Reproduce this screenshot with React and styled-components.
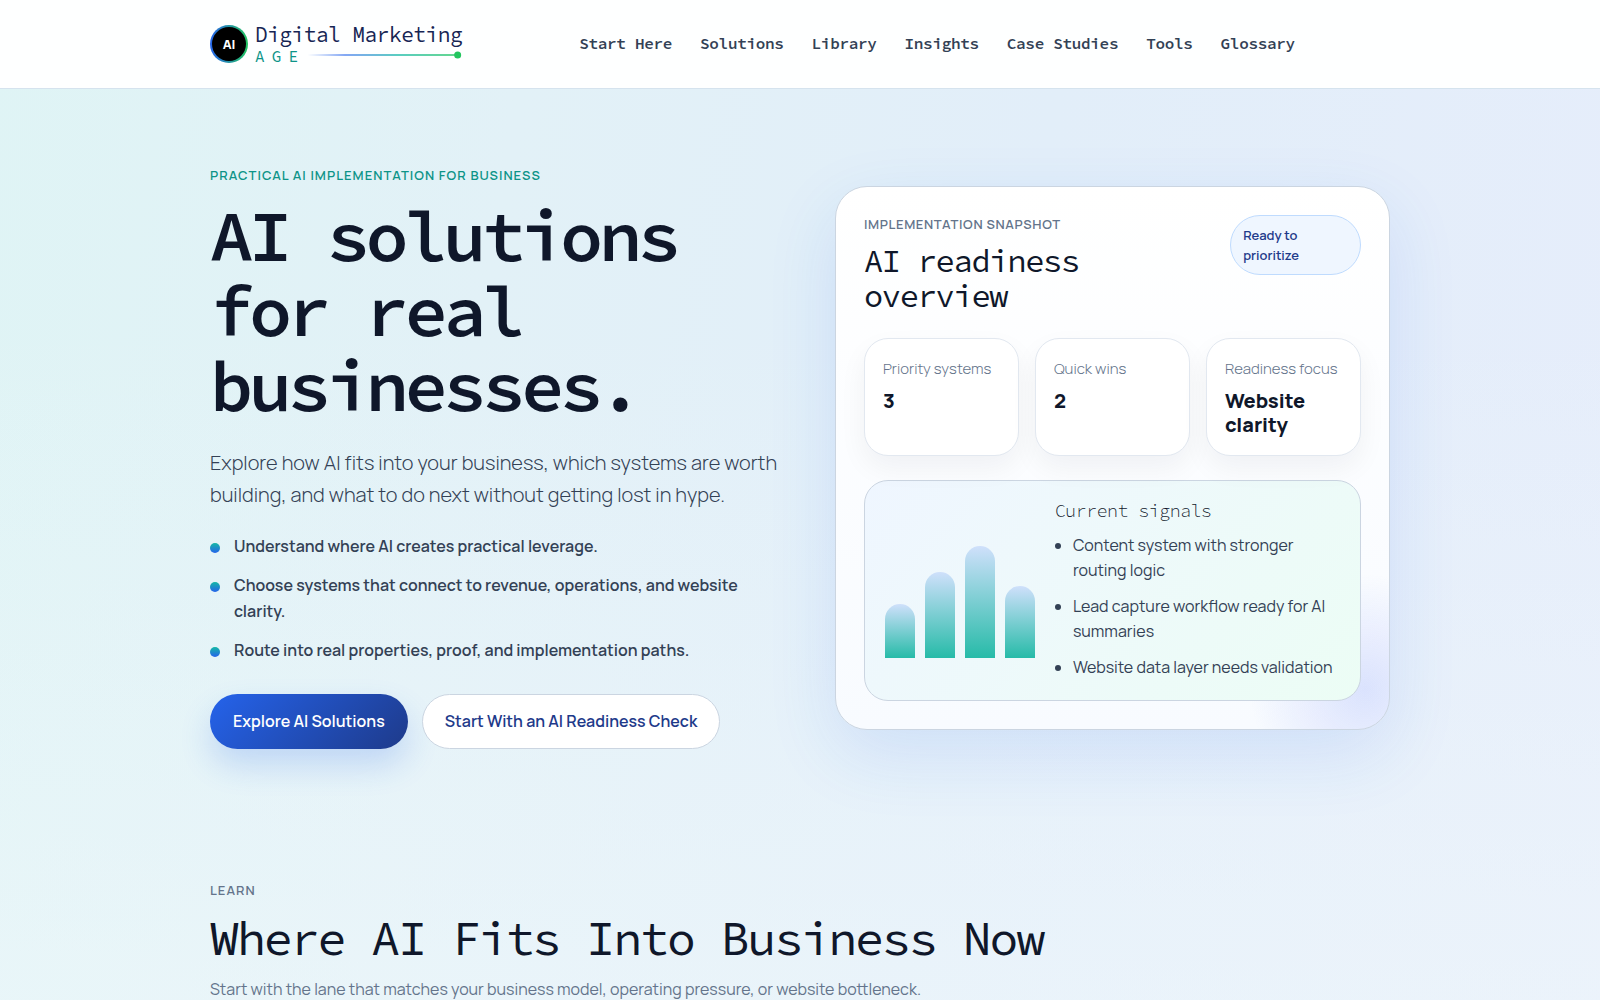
import React from 'react'
import styled, { createGlobalStyle } from 'styled-components'

const sans = `Manrope, Inter, 'Liberation Sans', sans-serif`
const mono = `'Source Code Pro', 'Noto Sans Mono', 'Liberation Mono', monospace`

const colors = {
	ink: '#0f172a',
	text: '#334155',
	muted: '#64748b',
	navy: '#1e3a8a',
	blue: '#2563eb',
	teal: '#0d9488',
	line: '#cbd5e1'
}

const GlobalStyle = createGlobalStyle`
	*, *::before, *::after {
		box-sizing: border-box;
	}
	body {
		margin: 0;
		color: ${colors.text};
		font-family: ${sans};
		font-size: 16px;
		line-height: 26px;
		background:
			linear-gradient(180deg, transparent 30%, rgba(240, 248, 251, 0.6) 100%),
			linear-gradient(100deg, #dff4f5 0%, #e2f1f7 30%, #e2eef9 60%, #e6edfb 100%);
	}
	h1, h2, h3, p, ul {
		margin: 0;
	}
`

const Container = styled.div`
	width: 100%;
	max-width: 1228px;
	margin: 0 auto;
	padding: 0 24px;
`

const Header = styled.header`
	background: rgba(255, 255, 255, 0.96);
	border-bottom: 1px solid #d5e3ee;
`

const HeaderRow = styled(Container)`
	display: flex;
	align-items: center;
	gap: 22px;
	min-height: 88px;
`

const Brand = styled.a`
	display: flex;
	align-items: center;
	gap: 7px;
	text-decoration: none;
`

const BrandMark = styled.span`
	display: grid;
	place-items: center;
	width: 38px;
	height: 38px;
	border: 2px solid transparent;
	border-radius: 50%;
	background:
		linear-gradient(#000, #000) padding-box,
		linear-gradient(90deg, ${colors.blue}, #22c55e) border-box;
	color: #fff;
	font-size: 13px;
	font-weight: 800;
	line-height: 16px;
`

const BrandName = styled.span`
	display: grid;
	font-family: ${mono};
`

const BrandTop = styled.span`
	color: #172554;
	font-size: 21px;
	line-height: 23px;
	letter-spacing: -0.02em;
`

const BrandBottom = styled.span`
	display: flex;
	align-items: center;
	color: ${colors.teal};
	font-size: 16px;
	line-height: 20px;
	letter-spacing: 0.45em;
`

const BrandRule = styled.svg`
	flex: 1;
	height: 8px;
	min-width: 0;
	margin-bottom: 2px;
`

const Nav = styled.nav`
	display: flex;
	flex: 1;
	justify-content: center;
	gap: 28px;
`

const NavLink = styled.a`
	padding-bottom: 2px;
	color: ${colors.text};
	font-family: ${mono};
	font-size: 16px;
	font-weight: 600;
	letter-spacing: -0.02em;
	text-decoration: none;
	white-space: nowrap;
`

const Hero = styled(Container)`
	display: grid;
	grid-template-columns: minmax(0, 1.05fr) minmax(0, 1fr);
	align-items: center;
	gap: 42px;
	padding-top: 77px;
	padding-bottom: 132px;
`

const Eyebrow = styled.p`
	color: ${p => (p.$accent ? colors.teal : colors.muted)};
	font-size: 13px;
	font-weight: 600;
	line-height: 18px;
	letter-spacing: ${p => (p.$tight ? '0.05em' : '0.08em')};
	text-transform: uppercase;
`

const HeroTitle = styled.h1`
	margin-top: 14px;
	color: ${colors.ink};
	font-family: ${mono};
	font-size: 72px;
	font-weight: 600;
	line-height: 75px;
	letter-spacing: -0.06em;
`

const Lead = styled.p`
	margin-top: 24px;
	font-size: 20px;
	font-weight: 300;
	line-height: 32px;
`

const Points = styled.ul`
	display: grid;
	gap: 13px;
	max-width: 560px;
	margin-top: 22px;
	padding: 0;
	list-style: none;
`

const Point = styled.li`
	display: flex;
	gap: 14px;
	font-weight: 600;

	&::before {
		content: '';
		flex: none;
		width: 10px;
		height: 10px;
		margin-top: 10px;
		border-radius: 50%;
		background: linear-gradient(180deg, #14b8a6, ${colors.blue});
	}
`

const Actions = styled.div`
	display: flex;
	flex-wrap: wrap;
	gap: 14px;
	margin-top: 31px;
`

const Button = styled.a`
	padding: 14px 22px;
	border: 1px solid ${p => (p.$primary ? 'transparent' : colors.line)};
	border-radius: 999px;
	background: ${p => (p.$primary
		? `linear-gradient(135deg, ${colors.blue}, ${colors.navy}) border-box`
		: '#fff')};
	box-shadow: ${p => (p.$primary ? '0 16px 32px rgba(37, 99, 235, 0.2)' : 'none')};
	color: ${p => (p.$primary ? '#fff' : colors.navy)};
	font-weight: 600;
	line-height: 25px;
	text-decoration: none;
`

const Card = styled.section`
	padding: 28px;
	border: 1px solid ${colors.line};
	border-radius: 32px;
	background:
		radial-gradient(circle 115px at calc(100% - 24px) calc(100% - 40px), rgba(99, 125, 246, 0.2), transparent),
		linear-gradient(180deg, #fff, #f8fbff);
	box-shadow: 0 24px 70px rgba(37, 99, 235, 0.12);
`

const CardHead = styled.div`
	display: flex;
	align-items: flex-start;
	justify-content: space-between;
	gap: 16px;
`

const CardTitle = styled.h2`
	margin-top: 11px;
	color: ${colors.ink};
	font-family: ${mono};
	font-size: 32px;
	font-weight: 400;
	line-height: 35px;
	letter-spacing: -0.04em;
`

const Pill = styled.span`
	padding: 9px 12px;
	border: 1px solid #bfdbfe;
	border-radius: 999px;
	background: #eff6ff;
	color: ${colors.navy};
	font-size: 13px;
	font-weight: 600;
	line-height: 20px;
`

const Stats = styled.div`
	display: grid;
	grid-template-columns: repeat(3, minmax(0, 1fr));
	gap: 16px;
	margin-top: 24px;
`

const Stat = styled.div`
	display: grid;
	align-content: start;
	gap: 8px;
	padding: 18px;
	border: 1px solid #e2e8f0;
	border-radius: 24px;
	background: #fff;
	box-shadow: 0 12px 28px rgba(15, 23, 42, 0.05);
`

const StatLabel = styled.span`
	color: ${colors.muted};
	font-size: 15px;
	font-weight: 300;
	line-height: 24px;
`

const StatValue = styled.strong`
	color: ${colors.ink};
	font-size: 20px;
	font-weight: 800;
	line-height: 24px;
`

const Signals = styled.div`
	display: grid;
	grid-template-columns: auto 1fr;
	align-items: center;
	gap: 20px;
	margin-top: 24px;
	padding: 20px;
	border: 1px solid ${colors.line};
	border-radius: 24px;
	background: linear-gradient(135deg, #eff6ff, #ecfdf5);
`

const Chart = styled.div`
	display: flex;
	align-items: flex-end;
	gap: 10px;
	height: 136px;
`

const ChartBar = styled.span`
	width: 30px;
	border-radius: 15px 15px 0 0;
	background: linear-gradient(180deg, #cfe0fb, #26bba8);
`

const SignalsTitle = styled.h3`
	color: ${colors.ink};
	font-family: ${mono};
	font-size: 18px;
	font-weight: 300;
	line-height: 20px;
	letter-spacing: -0.02em;
`

const SignalList = styled.ul`
	display: grid;
	gap: 11px;
	margin-top: 12px;
	padding-left: 18px;
	line-height: 25px;
`

const Learn = styled(Container)`
	padding-bottom: 80px;
`

const SectionTitle = styled.h2`
	margin: 13px 0 11px;
	color: ${colors.ink};
	font-family: ${mono};
	font-size: 48px;
	font-weight: 400;
	line-height: 53px;
	letter-spacing: -0.04em;
`

const SectionText = styled.p`
	color: ${colors.muted};
`

const navItems = ['Start Here', 'Solutions', 'Library', 'Insights', 'Case Studies', 'Tools', 'Glossary']

const points = [
	'Understand where AI creates practical leverage.',
	'Choose systems that connect to revenue, operations, and website clarity.',
	'Route into real properties, proof, and implementation paths.'
]

const stats = [
	{ label: 'Priority systems', value: '3' },
	{ label: 'Quick wins', value: '2' },
	{ label: 'Readiness focus', value: 'Website clarity' }
]

const bars = [54, 86, 112, 72]

const signals = [
	'Content system with stronger routing logic',
	'Lead capture workflow ready for AI summaries',
	'Website data layer needs validation'
]

const Logo = () =>
	<Brand href='#home'>
		<BrandMark>AI</BrandMark>
		<BrandName>
			<BrandTop>Digital Marketing</BrandTop>
			<BrandBottom>
				AGE
				<BrandRule viewBox='0 0 154 8' preserveAspectRatio='xMaxYMid meet' aria-hidden='true'>
					<defs>
						<linearGradient id='rule' gradientUnits='userSpaceOnUse' x1='0' x2='150' y1='0' y2='0'>
							<stop offset='0' stopColor='#2563eb' stopOpacity='0' />
							<stop offset='0.25' stopColor='#2563eb' stopOpacity='0.8' />
							<stop offset='0.6' stopColor='#14b8a6' />
							<stop offset='1' stopColor='#22c55e' />
						</linearGradient>
					</defs>
					<rect x='0' y='3.3' width='150' height='1.4' fill='url(#rule)' />
					<circle cx='150' cy='4' r='3.5' fill='#22c55e' />
				</BrandRule>
			</BrandBottom>
		</BrandName>
	</Brand>

const Snapshot = () =>
	<Card>
		<CardHead>
			<div>
				<Eyebrow $tight>Implementation snapshot</Eyebrow>
				<CardTitle>AI readiness overview</CardTitle>
			</div>
			<Pill>Ready to prioritize</Pill>
		</CardHead>
		<Stats>
			{ stats.map(stat =>
				<Stat key={stat.label}>
					<StatLabel>{ stat.label }</StatLabel>
					<StatValue>{ stat.value }</StatValue>
				</Stat>
			)}
		</Stats>
		<Signals>
			<Chart aria-hidden='true'>
				{ bars.map(height => <ChartBar key={height} style={{ height }} />) }
			</Chart>
			<div>
				<SignalsTitle>Current signals</SignalsTitle>
				<SignalList>
					{ signals.map(signal => <li key={signal}>{ signal }</li>) }
				</SignalList>
			</div>
		</Signals>
	</Card>

const App = () =>
	<>
		<GlobalStyle />
		<Header>
			<HeaderRow>
				<Logo />
				<Nav>
					{ navItems.map(item => <NavLink key={item} href='#'>{ item }</NavLink>) }
				</Nav>
			</HeaderRow>
		</Header>
		<main>
			<Hero>
				<div>
					<Eyebrow $accent>Practical AI implementation for business</Eyebrow>
					<HeroTitle>AI solutions for real businesses.</HeroTitle>
					<Lead>
						Explore how AI fits into your business, which systems are worth
						building, and what to do next without getting lost in hype.
					</Lead>
					<Points>
						{ points.map(point => <Point key={point}>{ point }</Point>) }
					</Points>
					<Actions>
						<Button href='#solutions' $primary>Explore AI Solutions</Button>
						<Button href='#readiness'>Start With an AI Readiness Check</Button>
					</Actions>
				</div>
				<Snapshot />
			</Hero>
			<Learn>
				<Eyebrow>Learn</Eyebrow>
				<SectionTitle>Where AI Fits Into Business Now</SectionTitle>
				<SectionText>
					Start with the lane that matches your business model, operating pressure, or website bottleneck.
				</SectionText>
			</Learn>
		</main>
	</>

export default App
